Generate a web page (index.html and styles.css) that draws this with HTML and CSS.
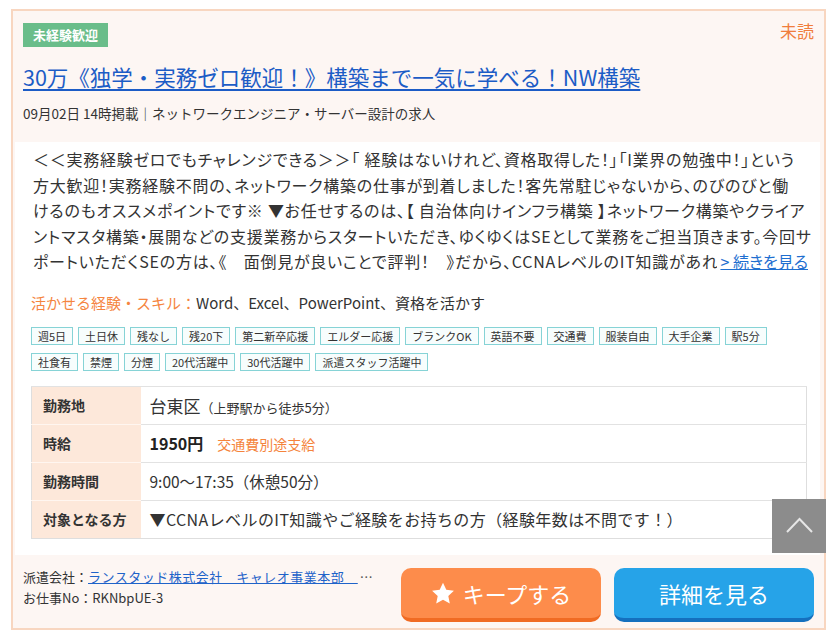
FILE: index.html
```html
<!DOCTYPE html>
<html lang="ja">
<head>
<meta charset="utf-8">
<title>求人</title>
<link rel="stylesheet" href="styles.css">
</head>
<body>
<div class="card">
  <div class="head">
    <div class="head-top">
      <span class="badge">未経験歓迎</span>
      <span class="unread">未読</span>
    </div>
    <a class="title" href="#">30万《独学・実務ゼロ歓迎！》構築まで一気に学べる！NW構築</a>
    <p class="meta">09月02日 14時掲載｜ネットワークエンジニア・サーバー設計の求人</p>
  </div>
  <div class="body">
    <div class="desc">
      <span class="line">＜＜実務経験ゼロでもチャレンジできる＞＞「 経験はないけれど、資格取得した！」「I業界の勉強中！」という</span>
      <span class="line">方大歓迎！実務経験不問の、ネットワーク構築の仕事が到着しました！客先常駐じゃないから、のびのびと働</span>
      <span class="line">けるのもオススメポイントです※ ▼お任せするのは、【 自治体向けインフラ構築 】ネットワーク構築やクライア</span>
      <span class="line">ントマスタ構築・展開などの支援業務からスタートいただき、ゆくゆくはSEとして業務をご担当頂きます。今回サ</span>
      <span class="line last"><span class="clip">ポートいただくSEの方は、《　面倒見が良いことで評判！　》だから、CCNAレベルのIT知識があれば</span><a class="more" href="#">&gt; 続きを見る</a></span>
    </div>
    <p class="skills"><span class="skills-label">活かせる経験・スキル：</span>Word、Excel、PowerPoint、資格を活かす</p>
    <ul class="tags">
      <li>週5日</li><li>土日休</li><li>残なし</li><li>残20下</li><li>第二新卒応援</li><li>エルダー応援</li><li>ブランクOK</li><li>英語不要</li><li>交通費</li><li>服装自由</li><li>大手企業</li><li>駅5分</li>
      <li>社食有</li><li>禁煙</li><li>分煙</li><li>20代活躍中</li><li>30代活躍中</li><li>派遣スタッフ活躍中</li>
    </ul>
    <table class="info">
      <tr><th>勤務地</th><td><span class="area">台東区</span><span class="small">（上野駅から徒歩5分）</span></td></tr>
      <tr><th>時給</th><td><span class="wage">1950円</span><span class="note">交通費別途支給</span></td></tr>
      <tr><th>勤務時間</th><td>9:00〜17:35（休憩50分）</td></tr>
      <tr><th>対象となる方</th><td class="wide">▼CCNAレベルのIT知識やご経験をお持ちの方（経験年数は不問です！）</td></tr>
    </table>
  </div>
  <div class="foot">
    <div class="foot-info">
      <p>派遣会社：<a href="#">ランスタッド株式会社　キャレオ事業本部　</a><span class="dots">…</span></p>
      <p>お仕事No：RKNbpUE-3</p>
    </div>
    <div class="actions">
      <a class="btn keep" href="#"><svg class="star" width="24" height="23" viewBox="0 0 24 23"><path d="M12 0.8l3.3 7 7.6 0.9-5.6 5.2 1.5 7.6L12 17.7 5.2 21.5l1.5-7.6L1.1 8.7l7.6-0.9z" fill="#fff"/></svg>キープする</a>
      <a class="btn detail" href="#">詳細を見る</a>
    </div>
  </div>
</div>
<a class="totop" href="#"><svg width="54" height="54" viewBox="0 0 54 54"><polyline points="15,33 27.5,20 40,33" fill="none" stroke="#e6e6e6" stroke-width="2"/></svg></a>
</body>
</html>
```
FILE: styles.css
```css
* { box-sizing: border-box; }
html, body { margin: 0; padding: 0; background: #fff; }
body {
  font-family: "Noto Sans CJK JP", "Noto Sans", sans-serif;
  color: #333;
  position: relative;
  width: 835px;
  height: 639px;
  overflow: hidden;
}
p { margin: 0; }
a { color: #1f63c9; }

.card {
  margin: 9px 0 0 11px;
  width: 815px;
  border: 2px solid #f8d6c0;
  background: #fdf6f3;
}

.head { padding: 12px 10px 19px 10px; }
.head-top { display: flex; justify-content: space-between; align-items: flex-start; height: 24px; }
.badge {
  display: inline-block;
  height: 24px;
  line-height: 24px;
  padding: 0 10px;
  background: #6abd8a;
  color: #fff;
  font-size: 13px;
  font-weight: bold;
}
.unread { color: #f07d3c; font-size: 17px; line-height: 20px; margin-top: -2px; }
.title {
  display: block;
  margin-top: 15px;
  font-size: 21.5px;
  line-height: 30px;
  color: #1c5cc6;
  text-decoration: underline;
  text-underline-offset: 3px;
  white-space: nowrap;
}
.meta { margin-top: 11px; font-size: 13.5px; line-height: 20px; color: #333; }

.body {
  background: #fff;
  margin: 0 4px 0 2px;
  padding: 5px 12px 16px 16px;
}
.desc { padding-left: 2px; font-size: 16px; line-height: 25.5px; color: #333; font-feature-settings: "palt"; letter-spacing: 0.75px; }
.line { display: block; white-space: nowrap; }
.line.last { display: flex; }
.clip { flex: 1; overflow: hidden; white-space: nowrap; }
.more { margin-left: 3px; color: #1f6fd0; text-decoration: underline; letter-spacing: 0; }

.skills { margin-top: 15px; font-size: 15px; line-height: 25px; color: #333; }
.skills-label { color: #f5853f; }

.tags {
  list-style: none;
  margin: 12px 0 0;
  padding: 0;
  display: flex;
  flex-wrap: wrap;
  gap: 8px 5px;
}
.tags li {
  border: 1px solid #86d3d6;
  background: #f7fdfd;
  font-size: 11px;
  line-height: 16px;
  padding: 0 6px;
  color: #333;
}

.info {
  margin-top: 15px;
  width: 776px;
  border-collapse: collapse;
  border: 1px solid #dedede;
}
.info th, .info td { height: 38px; border-top: 1px solid #e2e2e2; padding: 0; vertical-align: middle; }
.info th {
  width: 109px;
  background: #fde8da;
  text-align: left;
  padding-left: 11px;
  font-size: 14px;
  font-weight: bold;
  color: #333;
  border-top-color: #fff6f0;
}
.info tr:first-child th { border-top-color: #e2e2e2; }
.info td { padding-left: 9px; font-size: 15.5px; color: #333; }
.info td.wide { font-size: 16px; letter-spacing: 0.4px; }
.area { font-size: 17px; }
.small { font-size: 13px; }
.wage { font-size: 16px; font-weight: bold; color: #222; }
.note { font-size: 14px; color: #f5843c; margin-left: 14px; }

.foot {
  display: flex;
  justify-content: space-between;
  align-items: flex-start;
  padding: 11px 10px 6px 10px;
}
.foot-info { font-size: 13px; line-height: 21px; color: #333; }
.foot-info a { color: #1f63c9; letter-spacing: 0.5px; }
.dots { color: #555; margin-left: 2px; }
.actions { display: flex; gap: 13px; margin-top: 2px; }
.btn {
  display: flex;
  align-items: center;
  justify-content: center;
  width: 200px;
  height: 54px;
  border-radius: 10px;
  color: #fff;
  font-size: 22px;
  text-decoration: none;
  padding-top: 1px;
}
.keep { background: #fd8c4b; border-bottom: 4px solid #f06b23; }
.detail { background: #26a3e8; border-bottom: 4px solid #1570be; }
.star { margin-right: 8px; }

.totop {
  position: absolute;
  left: 772px;
  top: 499px;
  width: 54px;
  height: 54px;
  background: #8c8c8c;
}
.totop svg { display: block; }
```
